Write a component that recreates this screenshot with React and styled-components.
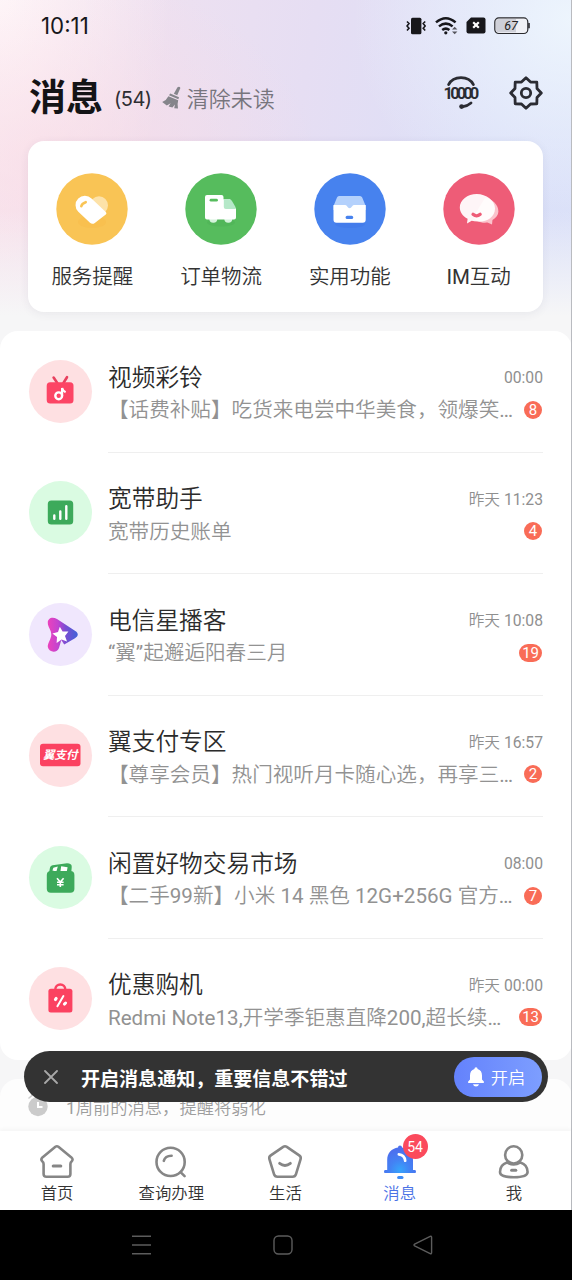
import React from 'react';
import styled, { createGlobalStyle } from 'styled-components';

const GlobalStyle = createGlobalStyle`
  body {
    margin: 0;
    background: #f6f6f7;
    font-family: Roboto, "Noto Sans CJK SC DemiLight", "Noto Sans CJK SC", sans-serif;
    font-weight: 400;
    color: #333;
    text-spacing-trim: space-all;
  }
`

const Screen = styled.div`
  position: relative;
  width: 572px;
  height: 1280px;
  box-sizing: border-box;
  overflow: hidden;
  display: flex;
  flex-direction: column;
  background:
    linear-gradient(to bottom, rgba(246, 246, 247, 0) 210px, #f6f6f7 316px),
    radial-gradient(ellipse 260px 200px at 60px 170px, rgba(250, 216, 226, .6), rgba(250, 216, 226, 0)),
    radial-gradient(ellipse 170px 300px at 0 0, rgba(255, 248, 250, .95), rgba(255, 248, 250, 0)),
    radial-gradient(ellipse 220px 200px at 100% 20px, rgba(238, 246, 253, .95), rgba(238, 246, 253, 0)),
    linear-gradient(100deg, #f5e3ee 0, #e6def3 40%, #dbdff8 65%, #d9e2fa 100%);
`

const EdgeLine = styled.div`
  position: absolute;
  top: 0;
  right: 0;
  width: 1px;
  height: 1210px;
  background: #b9bbc0;
`

const StatusBar = styled.div`
  flex: none;
  height: 51px;
  padding: 0 42px 0 41px;
  display: flex;
  align-items: center;
  justify-content: space-between;
  color: #17171b;
`

const Clock = styled.span`
  font-family: Inter, sans-serif;
  font-size: 22.3px;
  font-weight: 400;
  letter-spacing: 0;
`

const StatusIcons = styled.div`
  display: flex;
  align-items: center;
  gap: 8px;
`

const Header = styled.header`
  flex: none;
  height: 90px;
  box-sizing: border-box;
  padding: 0 29px 7px;
  display: flex;
  align-items: center;
  justify-content: space-between;
`

const HeaderLeft = styled.div`
  display: flex;
  align-items: center;
`

const Title = styled.h1`
  margin: 5px 0 0;
  font-family: "Noto Sans CJK SC", sans-serif;
  font-size: 37px;
  line-height: 50px;
  font-weight: 700;
  color: #141416;
`

const Count = styled.span`
  margin: 13px 0 0 11px;
  font-family: Inter, sans-serif;
  font-size: 20px;
  font-weight: 400;
  letter-spacing: -.5px;
  color: #2e2e33;
`

const ClearButton = styled.button`
  margin: 9px 0 0 9px;
  padding: 0;
  border: 0;
  background: none;
  display: flex;
  align-items: center;
  gap: 4px;
  font: inherit;
  font-size: 22px;
  color: #77757d;
`

const HeaderActions = styled.div`
  display: flex;
  align-items: center;
  gap: 30px;
`

const QuickCard = styled.section`
  flex: none;
  height: 171px;
  margin: 0 29px 19px 28px;
  box-sizing: border-box;
  padding-top: 32px;
  display: grid;
  grid-template-columns: repeat(4, 1fr);
  background: #fff;
  border-radius: 16px;
  box-shadow: 0 2px 10px rgba(60, 50, 90, .07);
`

const QuickItem = styled.a`
  display: flex;
  flex-direction: column;
  align-items: center;
  gap: 17px;
  font-size: 20.5px;
  line-height: 30px;
`

const List = styled.ul`
  flex: none;
  margin: 0 0 19px;
  padding: 0;
  list-style: none;
  background: #fff;
  border-radius: 18px;
`

const Row = styled.li`
  height: 121.5px;
  box-sizing: border-box;
  padding: 0 29px 0 29px;
  display: flex;
  gap: 16px;
`

const Avatar = styled.svg`
  flex: none;
  width: 63px;
  height: 63px;
  margin-top: 28.5px;
  border-radius: 50%;
  background: ${props => props.$tint};
`

const RowBody = styled.div`
  flex: 1;
  min-width: 0;
  padding-top: 30px;
  box-sizing: border-box;
  border-bottom: ${props => props.$last ? "0" : "1px solid #efefef"};
`

const Line = styled.div`
  height: 33px;
  display: flex;
  align-items: center;
  justify-content: space-between;
  white-space: nowrap;
`

const Name = styled.span`
  padding-top: 1px;
  font-size: 23.7px;
  line-height: 33px;
  color: #2b2b2b;
`

const Time = styled.time`
  font-size: 15.7px;
  line-height: 33px;
  color: #8f8f8f;
`

const Preview = styled.span`
  font-size: 20.6px;
  line-height: 33px;
  color: #929292;
`

const Badge = styled.span`
  min-width: 18px;
  height: 18px;
  margin: 0 1px 2px 0;
  padding: 0 ${props => props.$wide ? "3px" : "0"};
  box-sizing: border-box;
  border-radius: 9px;
  background: #f96c57;
  color: #fff;
  font-size: 15px;
  line-height: 18px;
  text-align: center;
`

const OldSection = styled.section`
  flex: 1;
  padding: 11px 28px 0;
  background: #fdfdfd;
  border-radius: 18px 18px 0 0;
`

const OldHint = styled.div`
  height: 32px;
  display: flex;
  align-items: center;
  gap: 18px;
  font-size: 17.3px;
  color: #9d9d9d;
`

const Bottom = styled.footer`
  position: absolute;
  left: 0;
  right: 0;
  bottom: 0;
`

const TabBar = styled.nav`
  width: 571px;
  height: 79px;
  box-sizing: border-box;
  padding-top: 13px;
  display: grid;
  grid-template-columns: repeat(5, 1fr);
  background: #fff;
  box-shadow: 0 -2px 4px rgba(0, 0, 0, .035);
`

const Tab = styled.a`
  position: relative;
  display: flex;
  flex-direction: column;
  align-items: center;
  font-size: 16.4px;
  line-height: 24px;
  color: ${props => props.$active ? "#4c73e6" : "#333"};

  svg {
    margin-bottom: 2px;
  }
`

const TabBadge = styled.span`
  position: absolute;
  top: -10px;
  left: 60px;
  width: 25px;
  height: 25px;
  border-radius: 50%;
  background: #fb4a5c;
  color: #fff;
  font-size: 14px;
  line-height: 26px;
  text-align: center;
`

const SystemNav = styled.div`
  height: 70px;
  padding: 0 139px 0 131px;
  display: flex;
  align-items: center;
  justify-content: space-between;
  background: #000;
`

const Toast = styled.div`
  position: absolute;
  left: 24px;
  top: 1051px;
  width: 524px;
  height: 51px;
  box-sizing: border-box;
  padding: 0 6px 0 20px;
  display: flex;
  align-items: center;
  border-radius: 26px;
  background: #333;
  color: #fff;
`

const ToastText = styled.span`
  flex: 1;
  margin: 1px 0 0 23px;
  font-family: "Noto Sans CJK SC", sans-serif;
  font-size: 19.05px;
  font-weight: 700;
  white-space: nowrap;
`

const OpenButton = styled.button`
  width: 88px;
  height: 40px;
  padding: 0 4px 0 0;
  border: 0;
  border-radius: 20px;
  display: flex;
  align-items: center;
  justify-content: center;
  gap: 6px;
  background: linear-gradient(to right, #6482fc, #7d9eff);
  color: #fff;
  font: inherit;
  font-size: 17.3px;
`

// white artwork on a coloured disc, 72 x 72
const QuickIcon = ({ color, children }) =>
  <svg width="72" height="72" viewBox="0 0 72 72">
    <circle cx="36" cy="36" r="35.7" fill={color} />
    {children}
  </svg>

const quickItems = [
  {
    label: '服务提醒',
    icon: (
      <QuickIcon color="#f9c455">
        <ellipse cx="36" cy="49" rx="14" ry="6" fill="#f7b541" opacity=".3" />
        <circle cx="43" cy="32.3" r="9" fill="#fde2a8" />
        <path d="M35.5 25.5L49.8 38.9Q51.2 40.2 49.8 41.4L38.8 50Q36.3 51.8 34 49.8L22.3 38.8A9 9 0 0 1 35.5 25.5Z" fill="#fff" />
        <path d="M25.3 33.2Q25.8 30.5 29.7 29.2" stroke="#f9c455" strokeWidth="2.6" strokeLinecap="round" fill="none" />
      </QuickIcon>
    ),
  },
  {
    label: '订单物流',
    icon: (
      <QuickIcon color="#56bc5d">
        <ellipse cx="36" cy="49.5" rx="14" ry="4" fill="#46a84e" opacity=".3" />
        <circle cx="28.3" cy="45.8" r="4" fill="#d5f3dc" />
        <circle cx="43.3" cy="45.8" r="4" fill="#d5f3dc" />
        <path d="M22 22H36.5Q38.5 22 38.5 24V26.3H45L51 36V44.5Q51 46.5 49 46.5H22Q20 46.5 20 44.5V24Q20 22 22 22Z" fill="#fff" />
        <path d="M38.8 26.3H44.5Q46 26.3 47 28L50.5 34V36H40.8Q38.8 36 38.8 34Z" fill="#b5e8c8" />
        <path d="M26 27.2H31.5" stroke="#56bc5d" strokeWidth="2.8" strokeLinecap="round" />
      </QuickIcon>
    ),
  },
  {
    label: '实用功能',
    icon: (
      <QuickIcon color="#4782ee">
        <ellipse cx="36" cy="51" rx="15" ry="4" fill="#3c74e4" opacity=".35" />
        <path d="M25 23H46Q47.5 23 48.2 24.5L51.7 33V37H19.5V33L23 24.5Q23.6 23 25 23Z" fill="#b4d1fc" />
        <path d="M19.5 32H31Q32.3 32 33 33.3Q35.6 37 38.2 33.3Q38.9 32 40.2 32H51.7V46.8Q51.7 49.8 48.7 49.8H22.5Q19.5 49.8 19.5 46.8Z" fill="#fff" />
        <rect x="31.6" y="42.8" width="7.6" height="3.2" rx="1.5" fill="#4782ee" />
      </QuickIcon>
    ),
  },
  {
    label: 'IM互动',
    icon: (
      <QuickIcon color="#ee5c77">
        <path d="M42 25C50 26 55.4 32 55.4 38.5C55.4 42 53 45 49.5 47L49 51.5L44.5 49.6C38 50.4 31 48 31 43Z" fill="#fbc3cc" />
        <path d="M33.8 21C43.2 21 52 27.5 52 35.5C52 44 44 49 35 48.6Q31 48.3 28.7 47.8L24 50.4L24.6 45.8C19.5 43.4 16.8 39 16.8 34.3C16.8 27 24.4 21 33.8 21Z" fill="#fff" opacity=".94" />
        <path d="M30 41.2Q33.6 44.4 37.2 41.2" stroke="#ee5c77" strokeWidth="3.2" strokeLinecap="round" fill="none" />
      </QuickIcon>
    ),
  },
]

const messages = [
  {
    name: '视频彩铃',
    time: '00:00',
    preview: '【话费补贴】吃货来电尝中华美食，领爆笑…',
    count: 8,
    tint: '#fee0e2',
    icon: (
      <>
        <path d="M24.6 17.5L28.3 23M38 17.2L34.4 23" stroke="#e8415f" strokeWidth="2.6" strokeLinecap="round" />
        <rect x="17.7" y="22.3" width="26.8" height="21.2" rx="3.5" fill="#fc4565" />
        <circle cx="29.7" cy="35.8" r="3.4" stroke="#fff" strokeWidth="2.4" fill="none" />
        <path d="M33.1 35.8V28Q34 31 36.6 32.2" stroke="#fff" strokeWidth="2.2" fill="none" />
      </>
    ),
  },
  {
    name: '宽带助手',
    time: '昨天 11:23',
    preview: '宽带历史账单',
    count: 4,
    tint: '#dafbe2',
    icon: (
      <>
        <rect x="18.8" y="19.5" width="25.4" height="24" rx="3.5" fill="#3daa5b" />
        <path d="M25.3 34.5V37.7M31.3 30.5V37.7M37.3 25.3V37.7" stroke="#fff" strokeWidth="2.4" strokeLinecap="round" />
      </>
    ),
  },
  {
    name: '电信星播客',
    time: '昨天 10:08',
    preview: '“翼”起邂逅阳春三月',
    count: 19,
    tint: '#f0e7fd',
    icon: (
      <>
        <defs>
          <linearGradient id="play" x1="18" y1="0" x2="49" y2="0" gradientUnits="userSpaceOnUse">
            <stop offset="0" stopColor="#ee42bb" />
            <stop offset=".35" stopColor="#c344cf" />
            <stop offset=".6" stopColor="#7a4ed2" />
            <stop offset="1" stopColor="#4063d8" />
          </linearGradient>
        </defs>
        <path
          d="M18.8 20C18.5 15 23.5 13.2 28 16L46.3 28C49.7 30.2 49.7 33 46 35.2L35.2 41.6L32.3 37L30 45C28.5 50 20 50 18.8 44C18.5 40 22.3 36 22.3 31.5C22.3 27 18.8 24 18.8 20Z"
          fill="url(#play)"
        />
        <path d="M30.8 23.8L33.6 28.6L39.4 28.6L36 33L38 38.6L32.6 36.6L27.6 40L28 34L23.4 30.4L29 29Z" fill="#fff" />
      </>
    ),
  },
  {
    name: '翼支付专区',
    time: '昨天 16:57',
    preview: '【尊享会员】热门视听月卡随心选，再享三…',
    count: 2,
    tint: '#fee0e2',
    icon: (
      <>
        <rect x="11" y="19.8" width="40.5" height="22.4" rx="3" fill="#fb4261" />
        <text x="31.2" y="35.2" textAnchor="middle" fontFamily="Noto Sans CJK SC, sans-serif" fontSize="11.5" fontWeight="700" fontStyle="italic" fill="#fff">翼支付</text>
      </>
    ),
  },
  {
    name: '闲置好物交易市场',
    time: '08:00',
    preview: '【二手99新】小米 14 黑色 12G+256G 官方…',
    count: 7,
    tint: '#dafbe2',
    icon: (
      <>
        <path d="M20 27L21 21.6Q21.5 19.6 23.5 19.2L38 17.2Q40.2 17.2 42 18.6Q43 19.4 42.7 21.6L42.2 27Z" fill="#3daa5b" />
        <path d="M23.4 24.5L24.4 21.8L28.8 20.6L27.4 25.4ZM31.4 25.4L32.2 20.2L38.6 21.2L37.8 25.4Z" fill="#fff" />
        <rect x="17.8" y="25" width="27.6" height="21.8" rx="4" fill="#3daa5b" />
        <path d="M28 32.2L31.3 36L34.6 32.2M31.3 36V41M28 36.2H34.6M28 38.8H34.6" stroke="#fff" strokeWidth="1.6" fill="none" />
      </>
    ),
  },
  {
    name: '优惠购机',
    time: '昨天 00:00',
    preview: 'Redmi Note13,开学季钜惠直降200,超长续…',
    count: 13,
    tint: '#fee0e2',
    icon: (
      <>
        <path d="M26.3 24V22.5A5 5 0 0 1 36.3 22.5V24" stroke="#fb4261" strokeWidth="2.4" fill="none" />
        <rect x="19.4" y="21.8" width="24" height="23.6" rx="2.5" fill="#fb4261" />
        <path d="M34.4 29L28.4 39.2" stroke="#fff" strokeWidth="2" strokeLinecap="round" />
        <path d="M26.4 32.6L27.2 31.4M35.4 37.1L36.6 36" stroke="#fff" strokeWidth="3" strokeLinecap="round" />
      </>
    ),
  },
]

const tabs = [
  {
    label: '首页',
    icon: (
      <>
        <path d="M16.4 2.8Q17.9 1.7 19.4 2.8L32.4 13.4Q34.6 15.4 32.6 17.4Q31.4 18.4 31.4 20V30Q31.4 32.8 28.6 32.8H7.4Q4.6 32.8 4.6 30V20Q4.6 18.4 3.4 17.4Q1.4 15.4 3.4 13.4Z" />
        <path d="M14.2 22H21.8" strokeWidth="3" />
      </>
    ),
  },
  {
    label: '查询办理',
    icon: (
      <>
        <circle cx="17.6" cy="17.9" r="14.1" />
        <path d="M27.8 28.4L31.6 32.2" />
        <path d="M10.8 16.8Q12.2 11.6 18.6 11.7" />
      </>
    ),
  },
  {
    label: '生活',
    icon: (
      <>
        <path d="M16.2 2.9Q18 1.7 19.8 2.9L32.2 11.4Q34.3 12.9 33.6 15.2L29 30.2Q28.2 32.8 25.6 32.8H10.4Q7.8 32.8 7 30.2L2.4 15.2Q1.7 12.9 3.8 11.4Z" />
        <path d="M12.6 19.3Q18 23.6 23.4 19.3" strokeWidth="2.8" />
      </>
    ),
  },
  {
    label: '消息',
    active: true,
    badge: 54,
    icon: (
      <>
        <defs>
          <radialGradient id="bell" cx="18" cy="26" r="20" gradientUnits="userSpaceOnUse">
            <stop offset="0" stopColor="#36a4fb" />
            <stop offset=".5" stopColor="#4382f4" />
            <stop offset="1" stopColor="#4c70ee" />
          </radialGradient>
        </defs>
        <path
          d="M16 3.5Q16 1.6 18 1.6Q20 1.6 20 3.5C27 4.5 31 9 31 16V26H33Q34 26 34 27.8Q34 29 33 29H3Q2 29 2 27.8Q2 26 3 26H5.2V16C5.2 9 9.5 4.5 16 3.5Z"
          fill="url(#bell)"
          stroke="none"
        />
        <path d="M16.8 10.4Q22.6 11 23.2 16.8" stroke="#fff" />
        <path d="M16.6 33.6H20" stroke="#3e8cf6" strokeWidth="3" />
      </>
    ),
  },
  {
    label: '我',
    icon: (
      <>
        <circle cx="17.7" cy="10.9" r="8.6" />
        <path d="M11 18.4Q17.7 22.6 24.4 18.4C29.4 20 31.6 24 31.6 28C31.6 31.8 26.6 33.2 17.8 33.2S4 31.8 4 28C4 24 6 20 11 18.4Z" />
        <path d="M15.6 26.2H19.8" strokeWidth="3" />
      </>
    ),
  },
]

// eight-pointed outline with a small centre ring
const gearPoints = Array.from({ length: 16 }, (_, i) => {
  const r = i % 2 ? 11.9 : 15.3
  const a = (i * Math.PI) / 8
  return `${17 + r * Math.sin(a)},${17 - r * Math.cos(a)}`
}).join(' ')

const SignalIcons = () =>
  <StatusIcons>
    <svg width="20" height="20" viewBox="0 0 20 20" fill="none" stroke="#17171b" strokeWidth="1.6">
      <rect x="5" y="1.8" width="10.4" height="16.4" rx="1.5" fill="#17171b" stroke="none" />
      <path d="M1 5.5L3 7.5L1 10L3 12.2L1 14.5M19.2 5.5L17.2 7.5L19.2 10L17.2 12.2L19.2 14.5" />
    </svg>
    <svg width="24" height="20" viewBox="0 0 24 20" fill="none" stroke="#17171b" strokeWidth="2.5">
      <path d="M2 6.4Q11.8 -2 21.6 6.4M5 10.4Q11.8 4.8 18.6 10.4M8.2 14Q11.8 11.2 15.4 14" />
      <circle cx="11.8" cy="16.8" r="1.6" fill="#17171b" stroke="none" />
      <path d="M18 13.6L20.7 10.8L23.4 13.6ZM18 15.4L20.7 18.2L23.4 15.4Z" fill="#55555c" stroke="none" />
    </svg>
    <svg width="20" height="17" viewBox="0 0 20 17">
      <path d="M5 .5H17.5Q19.5 .5 19.5 2.5V14.5Q19.5 16.5 17.5 16.5H2.5Q.5 16.5 .5 14.5V5Z" fill="#17171b" />
      <path d="M7.2 5.2L12.8 10.8M12.8 5.2L7.2 10.8" stroke="#fff" strokeWidth="2.2" />
    </svg>
    <svg width="36" height="18" viewBox="0 0 36 18">
      <rect x=".8" y=".9" width="33" height="15.6" rx="4" fill="#f0f1f6" stroke="#2a2a2e" strokeWidth="1.2" />
      <path d="M4.5 2.1H22V15.3H4.5Q2 15.3 2 12.8V4.6Q2 2.1 4.5 2.1Z" fill="#cfd0d8" />
      <path d="M35 5.9V11.3" stroke="#2a2a2e" strokeWidth="1.6" />
      <text x="17" y="13.2" textAnchor="middle" fontSize="12.5" fontStyle="italic" fill="#222">67</text>
    </svg>
  </StatusIcons>

const MessageRow = ({ message, last }) =>
  <Row>
    <Avatar viewBox="0 0 63 63" fill="none" $tint={message.tint}>{message.icon}</Avatar>
    <RowBody $last={last}>
      <Line>
        <Name>{message.name}</Name>
        <Time>{message.time}</Time>
      </Line>
      <Line>
        <Preview>{message.preview}</Preview>
        <Badge $wide={message.count > 9}>{message.count}</Badge>
      </Line>
    </RowBody>
  </Row>

const App = () =>
  <Screen>
    <GlobalStyle />
    <StatusBar>
      <Clock>10:11</Clock>
      <SignalIcons />
    </StatusBar>

    <Header>
      <HeaderLeft>
        <Title>消息</Title>
        <Count>(54)</Count>
        <ClearButton>
          <svg width="22" height="24" viewBox="0 0 22 24" fill="#85858b">
            <path d="M16.5 2.2Q18.6 1.2 19.4 3L16.2 10.2L12.8 8.8Z" />
            <path d="M9.2 8.4L18 12.2L17.4 14.2L8 10.2Z" />
            <path d="M7.4 11.2L17.2 15.3Q16 19.5 17 23.4L13.2 23.2L14 19.6L11.4 22.6L7.6 21.4L9.6 18.2L5.8 20.4L1.2 17Q5.4 15.4 7.4 11.2Z" />
          </svg>
          清除未读
        </ClearButton>
      </HeaderLeft>
      <HeaderActions>
        <svg width="36" height="34" viewBox="0 0 36 34" fill="none" stroke="#2b2c33" strokeWidth="2.8" strokeLinecap="round">
          <path d="M5.6 8.6C10.5 -.6 25.5 -.6 30.4 8.6" />
          <text x=".6" y="23" fontSize="16.5" fontWeight="700" letterSpacing="-2.9" fill="#2b2c33" stroke="none">10000</text>
          <path d="M28 27Q24 30.4 20 30.6" />
          <circle cx="18.6" cy="30.6" r="2.4" fill="#2b2c33" stroke="none" />
        </svg>
        <svg width="34" height="34" viewBox="0 0 34 34" fill="none" stroke="#2b2c33" strokeWidth="2.8" strokeLinejoin="round">
          <polygon points={gearPoints} />
          <circle cx="17" cy="17" r="4.7" />
        </svg>
      </HeaderActions>
    </Header>

    <QuickCard>
      {quickItems.map(item =>
        <QuickItem key={item.label}>
          {item.icon}
          {item.label}
        </QuickItem>
      )}
    </QuickCard>

    <List>
      {messages.map((message, i) =>
        <MessageRow key={message.name} message={message} last={i === messages.length - 1} />
      )}
    </List>

    <OldSection>
      <OldHint>
        <svg width="20" height="24" viewBox="0 0 20 24" fill="none">
          <circle cx="10" cy="12.5" r="9.7" fill="#cbcbcb" />
          <path d="M1 4L4 1.5M19 4L16 1.5" stroke="#cbcbcb" strokeWidth="1.6" strokeLinecap="round" />
          <path d="M10 8V13H14.5" stroke="#fff" strokeWidth="2" />
        </svg>
        1周前的消息，提醒将弱化
      </OldHint>
    </OldSection>

    <EdgeLine />

    <Bottom>
      <TabBar>
        {tabs.map(tab =>
          <Tab key={tab.label} $active={tab.active}>
            <svg width="36" height="36" viewBox="0 0 36 36" fill="none" stroke="#868686" strokeWidth="2.6" strokeLinecap="round" strokeLinejoin="round">
              {tab.icon}
            </svg>
            {tab.label}
            {tab.badge && <TabBadge>{tab.badge}</TabBadge>}
          </Tab>
        )}
      </TabBar>
      <SystemNav>
        <svg width="21" height="20" viewBox="0 0 21 20" stroke="#5c5c5c" strokeWidth="1.4">
          <path d="M1 1.2H20M1 10H20M1 18.8H20" />
        </svg>
        <svg width="20" height="20" viewBox="0 0 20 20" fill="none" stroke="#5c5c5c" strokeWidth="1.4">
          <rect x="1" y="1" width="18" height="18" rx="4.5" />
        </svg>
        <svg width="20" height="20" viewBox="0 0 20 20" fill="none" stroke="#5c5c5c" strokeWidth="1.4" strokeLinejoin="round">
          <path d="M17.2 1.4Q18.6 .8 18.6 2.4V17.6Q18.6 19.2 17.2 18.6L1.6 10.8Q.4 10 1.6 9.2Z" />
        </svg>
      </SystemNav>
    </Bottom>

    <Toast>
      <svg width="14" height="14" viewBox="0 0 14 14" stroke="#a8a8a8" strokeWidth="1.8" strokeLinecap="round">
        <path d="M1 1L13 13M13 1L1 13" />
      </svg>
      <ToastText>开启消息通知，重要信息不错过</ToastText>
      <OpenButton>
        <svg width="18" height="20" viewBox="0 0 18 20" fill="#fff">
          <path d="M7.4 2Q7.4 .3 9 .3Q10.6 .3 10.6 2C13.6 2.9 15 5.2 15 8.4V12.4L17 14.8Q17.4 16 16 16H2Q.6 16 1 14.8L3 12.4V8.4C3 5.2 4.4 2.9 7.4 2Z" />
          <path d="M6 17.2H12Q11.4 19.6 9 19.6T6 17.2Z" />
        </svg>
        开启
      </OpenButton>
    </Toast>
  </Screen>

export default App;
